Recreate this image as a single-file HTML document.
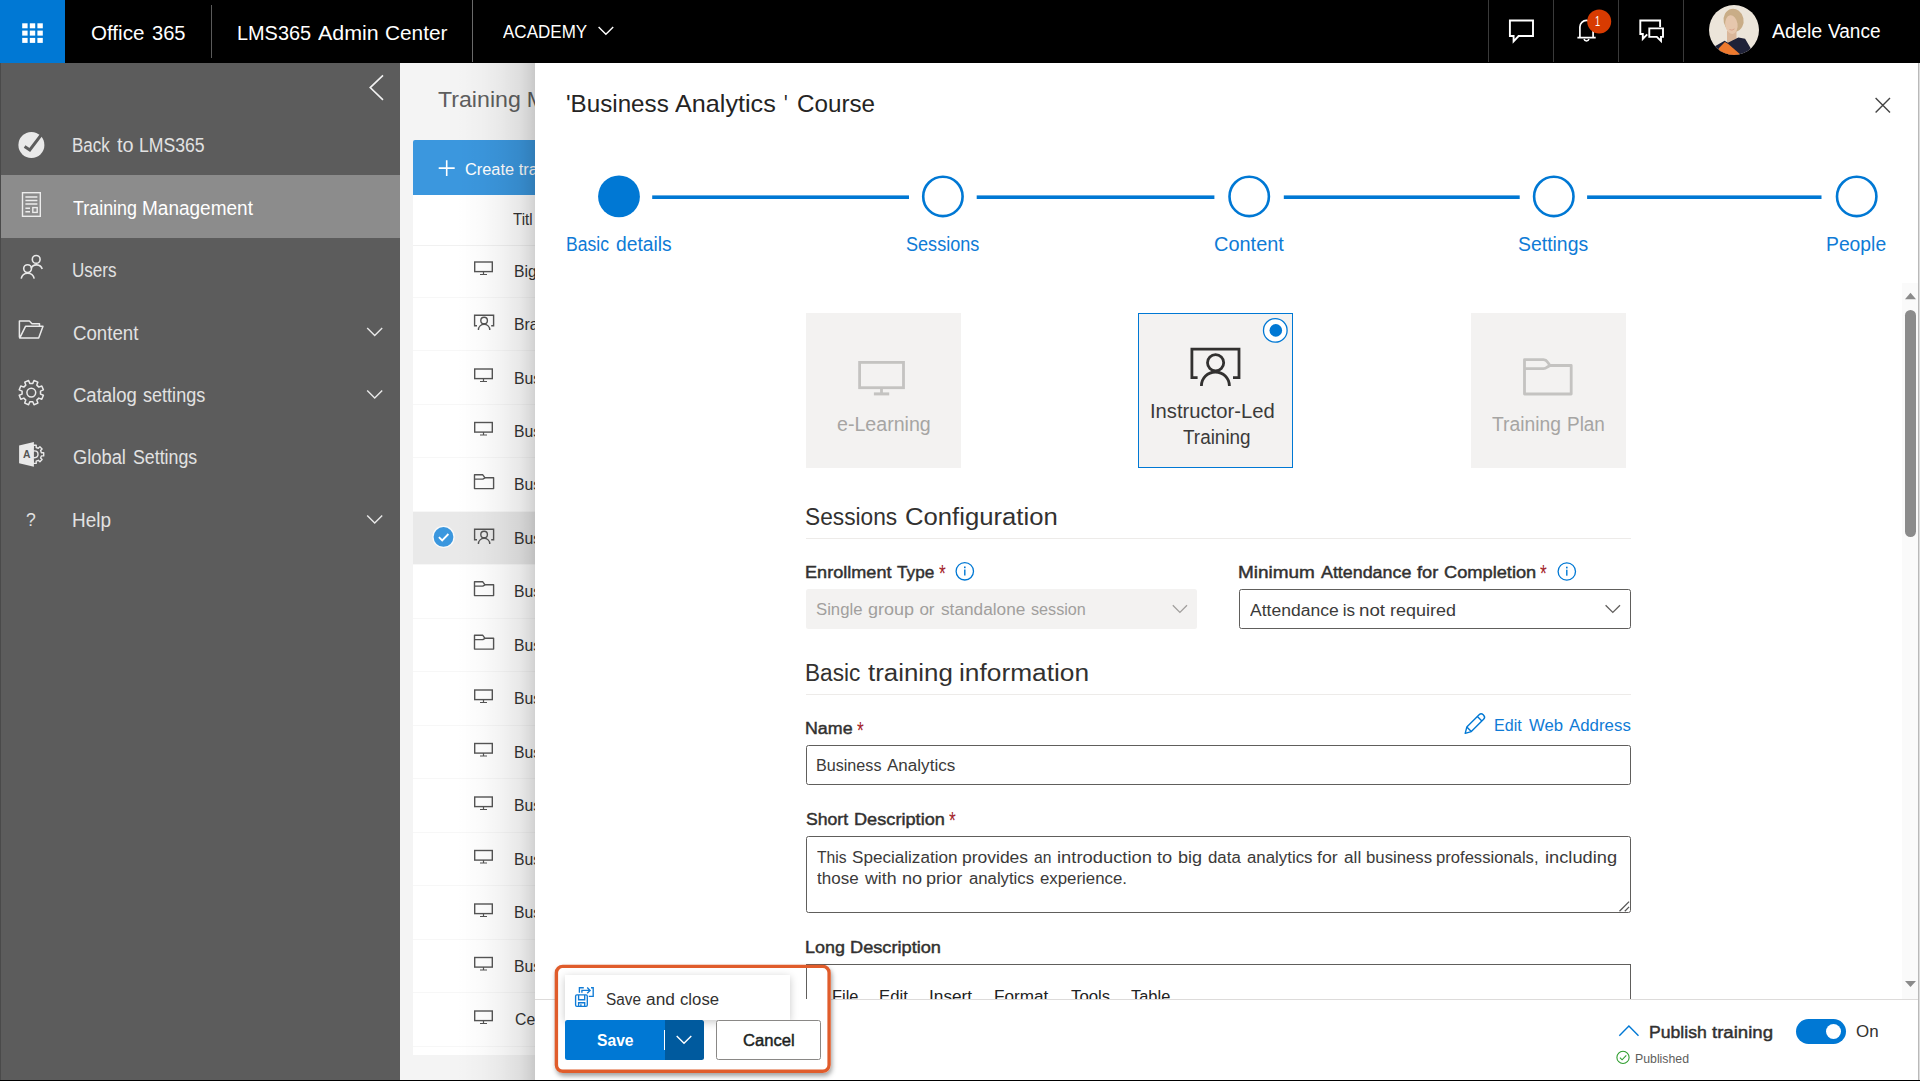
<!DOCTYPE html>
<html><head><meta charset="utf-8"><title>LMS365 Admin Center</title>
<style>
html,body{margin:0;padding:0}
body{width:1920px;height:1081px;overflow:hidden;position:relative;background:#f4f4f4;font-family:"Liberation Sans",sans-serif}
.t{position:absolute;white-space:nowrap;line-height:1;transform-origin:0 0}
.a{position:absolute}
</style></head><body>
<!-- main list area -->
<div class="a" style="left:413px;top:195px;width:130px;height:860px;background:#ffffff"></div>
<div class="a" style="left:413px;top:140px;width:130px;height:55px;background:#3b97de;border-radius:2px 0 0 0"></div>
<div class="a" style="left:413px;top:511px;width:130px;height:53.5px;background:#e9e9e9"></div>
<div class="a" style="left:413px;top:245px;width:130px;height:1px;background:#f1f1f1"></div>
<div class="a" style="left:413px;top:297px;width:130px;height:1px;background:#f7f7f7"></div>
<div class="a" style="left:413px;top:350px;width:130px;height:1px;background:#f7f7f7"></div>
<div class="a" style="left:413px;top:404px;width:130px;height:1px;background:#f7f7f7"></div>
<div class="a" style="left:413px;top:457px;width:130px;height:1px;background:#f7f7f7"></div>
<div class="a" style="left:413px;top:511px;width:130px;height:1px;background:#f7f7f7"></div>
<div class="a" style="left:413px;top:564px;width:130px;height:1px;background:#f7f7f7"></div>
<div class="a" style="left:413px;top:618px;width:130px;height:1px;background:#f7f7f7"></div>
<div class="a" style="left:413px;top:671px;width:130px;height:1px;background:#f7f7f7"></div>
<div class="a" style="left:413px;top:725px;width:130px;height:1px;background:#f7f7f7"></div>
<div class="a" style="left:413px;top:778px;width:130px;height:1px;background:#f7f7f7"></div>
<div class="a" style="left:413px;top:832px;width:130px;height:1px;background:#f7f7f7"></div>
<div class="a" style="left:413px;top:885px;width:130px;height:1px;background:#f7f7f7"></div>
<div class="a" style="left:413px;top:939px;width:130px;height:1px;background:#f7f7f7"></div>
<div class="a" style="left:413px;top:992px;width:130px;height:1px;background:#f7f7f7"></div>
<div class="a" style="left:413px;top:1046px;width:130px;height:1px;background:#f7f7f7"></div>
<span class="t" style="left:437.80px;top:87px;font-size:22.33px;line-height:25px;color:#5e5e5e;transform:scaleX(1.0367);">Training</span>
<span class="t" style="left:526.80px;top:87px;font-size:22.33px;line-height:25px;color:#5e5e5e;">M</span>
<span class="t" style="left:465.30px;top:160px;font-size:17.06px;line-height:19px;color:#ffffff;transform:scaleX(0.9600);">Create tra</span>
<span class="t" style="left:513.20px;top:211px;font-size:15.84px;line-height:17px;color:#333333;transform:scaleX(0.9500);">Titl</span>
<span class="t" style="left:514.03px;top:262px;font-size:16.28px;line-height:18px;color:#333333;transform:scaleX(0.9700);">Big D</span>
<span class="t" style="left:514.03px;top:315px;font-size:16.28px;line-height:18px;color:#333333;transform:scaleX(0.9700);">Bran</span>
<span class="t" style="left:514.03px;top:369px;font-size:16.28px;line-height:18px;color:#333333;transform:scaleX(0.9700);">Bus</span>
<span class="t" style="left:514.03px;top:422px;font-size:16.28px;line-height:18px;color:#333333;transform:scaleX(0.9700);">Bus</span>
<span class="t" style="left:514.03px;top:475px;font-size:16.28px;line-height:18px;color:#333333;transform:scaleX(0.9700);">Bus</span>
<span class="t" style="left:514.03px;top:529px;font-size:16.28px;line-height:18px;color:#333333;transform:scaleX(0.9700);">Bus</span>
<span class="t" style="left:514.03px;top:582px;font-size:16.28px;line-height:18px;color:#333333;transform:scaleX(0.9700);">Bus</span>
<span class="t" style="left:514.03px;top:636px;font-size:16.28px;line-height:18px;color:#333333;transform:scaleX(0.9700);">Bus</span>
<span class="t" style="left:514.03px;top:689px;font-size:16.28px;line-height:18px;color:#333333;transform:scaleX(0.9700);">Bus</span>
<span class="t" style="left:514.03px;top:743px;font-size:16.28px;line-height:18px;color:#333333;transform:scaleX(0.9700);">Bus</span>
<span class="t" style="left:514.03px;top:796px;font-size:16.28px;line-height:18px;color:#333333;transform:scaleX(0.9700);">Bus</span>
<span class="t" style="left:514.03px;top:850px;font-size:16.28px;line-height:18px;color:#333333;transform:scaleX(0.9700);">Bus</span>
<span class="t" style="left:514.03px;top:903px;font-size:16.28px;line-height:18px;color:#333333;transform:scaleX(0.9700);">Bus</span>
<span class="t" style="left:514.03px;top:957px;font-size:16.28px;line-height:18px;color:#333333;transform:scaleX(0.9700);">Bus</span>
<span class="t" style="left:515.00px;top:1010px;font-size:16.28px;line-height:18px;color:#333333;transform:scaleX(0.9700);">Cer</span>
<svg class="a" style="left:0;top:0" width="545" height="1081" viewBox="0 0 545 1081"><g transform="translate(474,261.3)"><rect x="0.7" y="0.7" width="17.6" height="9.6" fill="none" stroke="#555" stroke-width="1.4"/><path d="M9.5 10.3v2.6M6 13.2h7" stroke="#555" stroke-width="1.2" fill="none"/></g><g transform="translate(474,314.5)" fill="none" stroke="#555" stroke-width="1.4"><path d="M3 11.3H0.6V0.7H19.6V11.3H17.2"/><circle cx="10.1" cy="6" r="3.3"/><path d="M4.4 15.4a5.7 5.7 0 0 1 11.4 0"/></g><g transform="translate(474,368.3)"><rect x="0.7" y="0.7" width="17.6" height="9.6" fill="none" stroke="#555" stroke-width="1.4"/><path d="M9.5 10.3v2.6M6 13.2h7" stroke="#555" stroke-width="1.2" fill="none"/></g><g transform="translate(474,421.8)"><rect x="0.7" y="0.7" width="17.6" height="9.6" fill="none" stroke="#555" stroke-width="1.4"/><path d="M9.5 10.3v2.6M6 13.2h7" stroke="#555" stroke-width="1.2" fill="none"/></g><g transform="translate(474,474.1)" fill="none" stroke="#555" stroke-width="1.4" stroke-linejoin="round"><path d="M0.5 0.7H8.8l2.2 3H19.6V14.5H0.5Z"/><path d="M0.5 5H8.8l2.2-1.3"/></g><g transform="translate(474,528.5)" fill="none" stroke="#555" stroke-width="1.4"><path d="M3 11.3H0.6V0.7H19.6V11.3H17.2"/><circle cx="10.1" cy="6" r="3.3"/><path d="M4.4 15.4a5.7 5.7 0 0 1 11.4 0"/></g><g transform="translate(474,581.1)" fill="none" stroke="#555" stroke-width="1.4" stroke-linejoin="round"><path d="M0.5 0.7H8.8l2.2 3H19.6V14.5H0.5Z"/><path d="M0.5 5H8.8l2.2-1.3"/></g><g transform="translate(474,634.6)" fill="none" stroke="#555" stroke-width="1.4" stroke-linejoin="round"><path d="M0.5 0.7H8.8l2.2 3H19.6V14.5H0.5Z"/><path d="M0.5 5H8.8l2.2-1.3"/></g><g transform="translate(474,689.3)"><rect x="0.7" y="0.7" width="17.6" height="9.6" fill="none" stroke="#555" stroke-width="1.4"/><path d="M9.5 10.3v2.6M6 13.2h7" stroke="#555" stroke-width="1.2" fill="none"/></g><g transform="translate(474,742.8)"><rect x="0.7" y="0.7" width="17.6" height="9.6" fill="none" stroke="#555" stroke-width="1.4"/><path d="M9.5 10.3v2.6M6 13.2h7" stroke="#555" stroke-width="1.2" fill="none"/></g><g transform="translate(474,796.3)"><rect x="0.7" y="0.7" width="17.6" height="9.6" fill="none" stroke="#555" stroke-width="1.4"/><path d="M9.5 10.3v2.6M6 13.2h7" stroke="#555" stroke-width="1.2" fill="none"/></g><g transform="translate(474,849.8)"><rect x="0.7" y="0.7" width="17.6" height="9.6" fill="none" stroke="#555" stroke-width="1.4"/><path d="M9.5 10.3v2.6M6 13.2h7" stroke="#555" stroke-width="1.2" fill="none"/></g><g transform="translate(474,903.3)"><rect x="0.7" y="0.7" width="17.6" height="9.6" fill="none" stroke="#555" stroke-width="1.4"/><path d="M9.5 10.3v2.6M6 13.2h7" stroke="#555" stroke-width="1.2" fill="none"/></g><g transform="translate(474,956.8)"><rect x="0.7" y="0.7" width="17.6" height="9.6" fill="none" stroke="#555" stroke-width="1.4"/><path d="M9.5 10.3v2.6M6 13.2h7" stroke="#555" stroke-width="1.2" fill="none"/></g><g transform="translate(474,1010.3)"><rect x="0.7" y="0.7" width="17.6" height="9.6" fill="none" stroke="#555" stroke-width="1.4"/><path d="M9.5 10.3v2.6M6 13.2h7" stroke="#555" stroke-width="1.2" fill="none"/></g><circle cx="443.5" cy="536.9" r="11.2" fill="#fff" fill-opacity="0.75"/><circle cx="443.5" cy="536.9" r="9.9" fill="#3b97de"/><path d="M438.9 537.1l3.3 3.3 6.2-6.4" fill="none" stroke="#fff" stroke-width="1.8"/><path d="M446.7 160.2v15.8M438.7 168.1h16" stroke="#fff" stroke-width="1.6" fill="none"/></svg>
<div class="a" style="left:455px;top:62px;width:80px;height:1019px;background:linear-gradient(to right,rgba(0,0,0,0) 0%,rgba(0,0,0,0.004) 10%,rgba(0,0,0,0.02) 35%,rgba(0,0,0,0.047) 57.5%,rgba(0,0,0,0.09) 81%,rgba(0,0,0,0.137) 92.5%,rgba(0,0,0,0.18) 100%)"></div>
<!-- sidebar -->
<div class="a" style="left:0px;top:62px;width:400px;height:1019px;background:#5c5c5c"></div>
<div class="a" style="left:0px;top:175px;width:400px;height:62.5px;background:#8c8c8c"></div>
<div class="a" style="left:0px;top:62px;width:1px;height:1019px;background:#4a4a4a"></div>
<!-- panel -->
<div class="a" style="left:535px;top:62px;width:1385px;height:1019px;background:#ffffff"></div>
<svg class="a" style="left:0;top:0" width="1920" height="300" viewBox="0 0 1920 300"><rect x="652.2" y="195.4" width="256.8" height="3.6" fill="#0078d4"/><rect x="976.7" y="195.4" width="237.7" height="3.6" fill="#0078d4"/><rect x="1283.8" y="195.4" width="235.9" height="3.6" fill="#0078d4"/><rect x="1587.1" y="195.4" width="234.4" height="3.6" fill="#0078d4"/><circle cx="619" cy="196.4" r="20.9" fill="#0078d4"/><circle cx="942.9" cy="196.4" r="19.7" fill="#fff" stroke="#0078d4" stroke-width="2.6"/><circle cx="1249.2" cy="196.4" r="19.7" fill="#fff" stroke="#0078d4" stroke-width="2.6"/><circle cx="1553.8" cy="196.4" r="19.7" fill="#fff" stroke="#0078d4" stroke-width="2.6"/><circle cx="1856.7" cy="196.4" r="19.7" fill="#fff" stroke="#0078d4" stroke-width="2.6"/><path d="M1875.6 98l14.4 14.4M1890 98l-14.4 14.4" stroke="#444" stroke-width="1.4" fill="none"/></svg>
<div class="a" style="left:806px;top:313px;width:155px;height:155px;background:#f3f2f1"></div>
<div class="a" style="left:1138px;top:313px;width:153px;height:153px;background:#f3f2f1;border:1px solid #0078d4"></div>
<div class="a" style="left:1471px;top:313px;width:155px;height:155px;background:#f3f2f1"></div>
<div class="a" style="left:806px;top:589px;width:391px;height:39.5px;background:#f3f2f1;border-radius:2.5px"></div>
<div class="a" style="left:1239px;top:589px;width:390px;height:38px;border:1px solid #605e5c;border-radius:2.5px"></div>
<div class="a" style="left:806px;top:745px;width:823px;height:38px;border:1px solid #605e5c;border-radius:2.5px"></div>
<div class="a" style="left:806px;top:836px;width:823px;height:75px;border:1px solid #605e5c;border-radius:2.5px"></div>
<div class="a" style="left:806px;top:964px;width:823px;height:60px;border:1px solid #605e5c"></div>
<svg class="a" style="left:0;top:0" width="1920" height="1000" viewBox="0 0 1920 1000"><g fill="none" stroke="#c4c3c1" stroke-width="2.8"><rect x="859.6" y="362.4" width="43.9" height="25.3"/><path d="M881.5 388v5"/><path d="M873.9 393.9h15.3" stroke-width="3"/></g><g fill="none" stroke="#323130" stroke-width="2.8"><path d="M1197.6 377.6H1191.9V349.2H1239V377.6H1233"/><circle cx="1215.6" cy="362.8" r="8.1"/><path d="M1201.4 386a14 14 0 0 1 28 0"/></g><circle cx="1275.3" cy="330.4" r="11.8" fill="#fff" stroke="#0078d4" stroke-width="1.3"/><circle cx="1275.8" cy="330.4" r="6.3" fill="#0078d4"/><g fill="none" stroke="#c4c3c1" stroke-width="2.8" stroke-linejoin="round"><path d="M1524.5 359.6H1543.5Q1546 359.6 1547.5 362L1550 365.5H1571.2V394H1524.5Z"/><path d="M1524.5 368.7H1543.5Q1545.5 368.7 1547 367.3L1550 365.5"/></g><rect x="806" y="538" width="825" height="1" fill="#edebe9"/><rect x="806" y="694" width="825" height="1" fill="#edebe9"/><circle cx="964.8" cy="571.3" r="8.7" fill="none" stroke="#0078d4" stroke-width="1.3"/><rect x="964.0999999999999" y="569.5" width="1.4" height="6" fill="#0078d4"/><rect x="964.0" y="566.5" width="1.6" height="1.7" fill="#0078d4"/><circle cx="1566.8" cy="571.5" r="8.7" fill="none" stroke="#0078d4" stroke-width="1.3"/><rect x="1566.1" y="569.7" width="1.4" height="6" fill="#0078d4"/><rect x="1566.0" y="566.7" width="1.6" height="1.7" fill="#0078d4"/><path d="M1172.8 605.2l7.1 7.2 7.1-7.2" fill="none" stroke="#a19f9d" stroke-width="1.3"/><path d="M1605.6 605.2l7.2 7.2 7.2-7.2" fill="none" stroke="#605e5c" stroke-width="1.3"/><g fill="none" stroke="#0078d4" stroke-width="1.4" stroke-linejoin="round"><path d="M1465.2 733.3l1.6-6.2 12.3-12.3a2.9 2.9 0 0 1 4.1 0l0.4 0.4a2.9 2.9 0 0 1 0 4.1l-12.3 12.3z"/><path d="M1466.8 727.1l4.5 4.5M1477.4 716.5l4.5 4.5"/></g><path d="M1619.5 911.2l9.6-9.6M1624.8 911.2l4.3-4.3" stroke="#555" stroke-width="1.3" fill="none"/></svg>
<div class="a" style="left:1902px;top:283px;width:16px;height:716px;background:#fafafa"></div>
<div class="a" style="left:1905px;top:310.3px;width:11px;height:227px;background:#8b8b8b;border-radius:5.5px"></div>
<svg class="a" style="left:1900px;top:285px" width="20" height="710" viewBox="0 0 20 710"><path d="M5 14.2l5.5-6.4 5.5 6.4z" fill="#8b8b8b"/><path d="M5 695.9l5.5 6.2 5.5-6.2z" fill="#8b8b8b"/></svg>
<div class="a" style="left:1918px;top:62px;width:1px;height:1019px;background:#b9b9b9"></div>
<div class="a" style="left:1919px;top:62px;width:1px;height:1019px;background:#dedede"></div>
<span class="t" style="left:831.64px;top:987px;font-size:17.06px;line-height:19px;color:#222222;transform:scaleX(0.9620);">File</span>
<span class="t" style="left:878.82px;top:987px;font-size:17.06px;line-height:19px;color:#222222;transform:scaleX(0.9812);">Edit</span>
<span class="t" style="left:929.19px;top:987px;font-size:17.06px;line-height:19px;color:#222222;transform:scaleX(1.0120);">Insert</span>
<span class="t" style="left:993.80px;top:987px;font-size:17.06px;line-height:19px;color:#222222;transform:scaleX(1.0047);">Format</span>
<span class="t" style="left:1070.80px;top:987px;font-size:17.06px;line-height:19px;color:#222222;transform:scaleX(0.9829);">Tools</span>
<span class="t" style="left:1131.40px;top:987px;font-size:17.06px;line-height:19px;color:#222222;transform:scaleX(0.9635);">Table</span>
<!-- footer -->
<div class="a" style="left:535px;top:999px;width:1383px;height:82px;background:#ffffff;border-top:1px solid #dddbda;box-sizing:border-box"></div>
<div class="a" style="left:555px;top:965px;width:275.5px;height:107.8px;background:#fff;border-radius:8px;box-shadow:1px 3px 5px rgba(0,0,0,0.38)"></div>
<svg class="a" style="left:540px;top:955px" width="310" height="126" viewBox="540 955 310 126"><rect x="556.4" y="966.4" width="272.7" height="104.9" rx="6.3" fill="none" stroke="#e05c2b" stroke-width="3.4"/></svg>
<div class="a" style="left:806px;top:968px;width:1px;height:31px;background:#605e5c"></div>
<div class="a" style="left:565px;top:975px;width:225px;height:45px;background:#fff;box-shadow:0 2px 8px rgba(0,0,0,0.22)"></div>
<div class="a" style="left:565px;top:1020.3px;width:100px;height:39.4px;background:#0078d4;border-radius:2.5px 0 0 2.5px"></div>
<div class="a" style="left:665px;top:1020.3px;width:38.8px;height:39.4px;background:#005a9e;border-radius:0 2.5px 2.5px 0"></div>
<div class="a" style="left:664px;top:1030.3px;width:1px;height:19.4px;background:#ffffff"></div>
<div class="a" style="left:716px;top:1020.3px;width:102.8px;height:37.4px;background:#fff;border:1px solid #8a8886;border-radius:2.5px"></div>
<div class="a" style="left:1796px;top:1019px;width:50px;height:25px;background:#0078d4;border-radius:12.5px"></div>
<div class="a" style="left:1826px;top:1023.7px;width:15.4px;height:15.4px;background:#fff;border-radius:50%"></div>
<svg class="a" style="left:0;top:0" width="1920" height="1081" viewBox="0 0 1920 1081"><path d="M676.7 1036l7.3 7.3 7.3-7.3" fill="none" stroke="#fff" stroke-width="1.4"/><path d="M1619.3 1035.7l9.6-9.7 9.6 9.7" fill="none" stroke="#0078d4" stroke-width="1.4"/><circle cx="1623" cy="1057.4" r="6.1" fill="none" stroke="#2f9e2f" stroke-width="1.1"/><path d="M1619.9 1057.6l2.2 2.2 4.2-4.4" fill="none" stroke="#2f9e2f" stroke-width="1.1"/><g fill="none" stroke="#0f7bd6" stroke-width="1.35"><rect x="575.6" y="994.9" width="11.7" height="11.4" rx="1.3"/><path d="M578.6 995v4.7h6.1v-4.7"/><path d="M578.6 1006.2v-3.5h6.1v3.5M580.9 1006.2v-1.9"/><path d="M579.4 992.8V987.7H583.8"/><path d="M591 987.7H593.2V996.3H588.8"/><path d="M581.9 992.8V990.4H589.4M587.2 987.5L590.1 990.4L587.2 993.3"/></g></svg>
<!-- top bar -->
<div class="a" style="left:0px;top:0px;width:1920px;height:62.5px;background:#000000"></div>
<div class="a" style="left:0px;top:0px;width:65px;height:62.5px;background:#0078d4"></div>
<div class="a" style="left:211px;top:5px;width:1px;height:53px;background:#5a5a5a"></div>
<div class="a" style="left:472px;top:0px;width:1px;height:62px;background:#6a6a6a"></div>
<div class="a" style="left:1488px;top:0px;width:1px;height:62px;background:#3a3a3a"></div>
<div class="a" style="left:1553px;top:0px;width:1px;height:62px;background:#3a3a3a"></div>
<div class="a" style="left:1618px;top:0px;width:1px;height:62px;background:#3a3a3a"></div>
<div class="a" style="left:1683px;top:0px;width:1px;height:62px;background:#3a3a3a"></div>
<svg class="a" style="left:0;top:0" width="1920" height="63" viewBox="0 0 1920 63"><rect x="22.2" y="23.3" width="5.4" height="5" fill="#fff"/><rect x="29.8" y="23.3" width="5.4" height="5" fill="#fff"/><rect x="37.4" y="23.3" width="5.4" height="5" fill="#fff"/><rect x="22.2" y="30.6" width="5.4" height="5" fill="#fff"/><rect x="29.8" y="30.6" width="5.4" height="5" fill="#fff"/><rect x="37.4" y="30.6" width="5.4" height="5" fill="#fff"/><rect x="22.2" y="37.9" width="5.4" height="5" fill="#fff"/><rect x="29.8" y="37.9" width="5.4" height="5" fill="#fff"/><rect x="37.4" y="37.9" width="5.4" height="5" fill="#fff"/><path d="M598.6 27l7.3 7.2 7.3-7.2" fill="none" stroke="#fff" stroke-width="1.4"/><path d="M1509.9 20.5H1533V36H1518.6L1513.6 41.4V36H1509.9Z" fill="none" stroke="#fff" stroke-width="1.9"/><path d="M1579.9 37.5V27a6.6 6.6 0 0 1 13.2 0V37.5M1577.4 37.6H1595.7" fill="none" stroke="#fff" stroke-width="1.7"/><path d="M1584 39a2.6 2.6 0 0 0 5 0" fill="none" stroke="#fff" stroke-width="1.5"/><circle cx="1599.2" cy="21.5" r="12" fill="#d83b01"/><path d="M1660.1 27V20.5H1640.3V34H1642.8V39L1647.2 34.4" fill="none" stroke="#fff" stroke-width="1.9"/><path d="M1649.3 28.4H1663V36.9H1661V41L1656.8 36.9H1649.3Z" fill="none" stroke="#fff" stroke-width="1.9"/><defs><clipPath id="av"><circle cx="1734" cy="30" r="25"/></clipPath></defs>
<g clip-path="url(#av)"><rect x="1708" y="4" width="52" height="52" fill="#ece5da"/>
<ellipse cx="1733.6" cy="20.3" rx="10" ry="11.6" fill="#c9ad87" transform="rotate(-12 1733.6 20.3)"/>
<rect x="1727" y="31" width="9.5" height="12.5" fill="#dab79a"/>
<ellipse cx="1731.4" cy="24.6" rx="6.2" ry="9.4" fill="#e6c7ad" transform="rotate(-8 1731.4 24.6)"/>
<path d="M1729.5 29.5q2.5 1.6 5 -0.6" fill="none" stroke="#d9a48c" stroke-width="1"/>
<path d="M1714.5 46.5L1724.6 40.8L1727.9 42.8L1738.4 37.6L1745.1 38.7L1750.4 47.8L1753 57H1712Z" fill="#1f2238"/>
<path d="M1724.9 42L1728.3 44L1739.8 54L1736 57H1722L1718.6 48.6Z" fill="#ee7a2e"/></g></svg>
<svg class="a" style="left:0;top:62px" width="400" height="600" viewBox="0 62 400 600"><path d="M383 75.3L370.2 87.6L383 99.9" fill="none" stroke="#f2f2f2" stroke-width="1.6"/><path d="M367.2 328.0l7.5 7.6 7.5-7.6" fill="none" stroke="#e9e9e9" stroke-width="1.4"/><path d="M367.2 390.5l7.5 7.6 7.5-7.6" fill="none" stroke="#e9e9e9" stroke-width="1.4"/><path d="M367.2 515.5l7.5 7.6 7.5-7.6" fill="none" stroke="#e9e9e9" stroke-width="1.4"/><circle cx="31.4" cy="145" r="13" fill="#e9e9e9"/><path d="M24.6 146.6l5.2 3.4 11.6-15.4" fill="none" stroke="#5c5c5c" stroke-width="3"/><g fill="none" stroke="#ececec" stroke-width="1.4"><rect x="22.5" y="192.7" width="17.8" height="23.6"/><path d="M25.4 197h12M25.4 200.5h12M25.4 204h12M25.4 208.2h4.6M25.4 211.7h4.6"/><rect x="32.8" y="207.6" width="4.4" height="4.8"/></g><g fill="none" stroke="#e9e9e9" stroke-width="1.6"><circle cx="36.2" cy="259.4" r="3.9"/><path d="M31 268.4a6 6 0 0 1 11.2 0.6"/><circle cx="27.6" cy="268.6" r="3.9"/><path d="M21.2 278.6a6.6 6.6 0 0 1 13 0"/></g><path d="M19.4 337.6V321H29.4L32 323.8H39.5V326.2M19.7 338.1L25.5 326.3H43L38.7 338.1Z" fill="none" stroke="#e9e9e9" stroke-width="1.5" stroke-linejoin="round"/><path d="M43.4 395.3L41.8 399.2L38.8 398.1L36.8 400.1L37.9 403.1L34.0 404.7L32.8 401.8L29.8 401.8L28.6 404.7L24.7 403.1L25.8 400.1L23.8 398.1L20.8 399.2L19.2 395.3L22.1 394.1L22.1 391.1L19.2 389.9L20.8 386.0L23.8 387.1L25.8 385.1L24.7 382.1L28.6 380.5L29.8 383.4L32.8 383.4L34.0 380.5L37.9 382.1L36.8 385.1L38.8 387.1L41.8 386.0L43.4 389.9L40.5 391.1L40.5 394.1Z" fill="none" stroke="#e9e9e9" stroke-width="1.5" stroke-linejoin="round"/><circle cx="31.3" cy="392.6" r="4.4" fill="none" stroke="#e9e9e9" stroke-width="1.5"/><path d="M43.7 452.7L43.7 455.9L41.4 455.9L40.6 458.0L42.1 459.6L39.9 461.8L38.3 460.3L36.2 461.1L36.2 463.4L33.0 463.4L33.0 461.1L30.9 460.3L29.3 461.8L27.1 459.6L28.6 458.0L27.8 455.9L25.5 455.9L25.5 452.7L27.8 452.7L28.6 450.6L27.1 449.0L29.3 446.8L30.9 448.3L33.0 447.5L33.0 445.2L36.2 445.2L36.2 447.5L38.3 448.3L39.9 446.8L42.1 449.0L40.6 450.6L41.4 452.7Z" fill="none" stroke="#e9e9e9" stroke-width="1.4" stroke-linejoin="round"/><circle cx="34.6" cy="454.3" r="3.4" fill="none" stroke="#e9e9e9" stroke-width="1.4"/><path d="M19.1 445.5L33.9 442V466.8L19.1 463.3Z" fill="#e9e9e9"/></svg>
<span class="t" style="left:22.6px;top:448.7px;font-size:11.5px;font-weight:700;color:#555;transform:scaleX(0.9)">A</span>
<span class="t" style="left:90.80px;top:21px;font-size:20.72px;line-height:23px;color:#ffffff;transform:scaleX(0.9941);">Office</span>
<span class="t" style="left:152.00px;top:21px;font-size:20.72px;line-height:23px;color:#ffffff;transform:scaleX(0.9693);">365</span>
<span class="t" style="left:236.54px;top:21px;font-size:20.72px;line-height:23px;color:#ffffff;transform:scaleX(0.9597);">LMS365</span>
<span class="t" style="left:317.80px;top:21px;font-size:20.72px;line-height:23px;color:#ffffff;transform:scaleX(1.0343);">Admin</span>
<span class="t" style="left:384.60px;top:21px;font-size:20.72px;line-height:23px;color:#ffffff;transform:scaleX(1.0035);">Center</span>
<span class="t" style="left:503.30px;top:21px;font-size:18.28px;line-height:21px;color:#ffffff;transform:scaleX(0.9318);">ACADEMY</span>
<span class="t" style="left:1772.40px;top:20px;font-size:19.5px;line-height:22px;color:#ffffff;transform:scaleX(1.0076);">Adele</span>
<span class="t" style="left:1827.80px;top:20px;font-size:19.5px;line-height:22px;color:#ffffff;transform:scaleX(0.9755);">Vance</span>
<span class="t" style="left:1595.34px;top:13px;font-size:14.04px;line-height:16px;color:#ffffff;transform:scaleX(0.6571);">1</span>
<span class="t" style="left:72.43px;top:134px;font-size:19.5px;line-height:22px;color:#e2e2e2;transform:scaleX(0.8732);">Back</span>
<span class="t" style="left:116.50px;top:134px;font-size:19.5px;line-height:22px;color:#e2e2e2;transform:scaleX(1.0172);">to</span>
<span class="t" style="left:138.90px;top:134px;font-size:19.5px;line-height:22px;color:#e2e2e2;transform:scaleX(0.9041);">LMS365</span>
<span class="t" style="left:73.30px;top:197px;font-size:19.5px;line-height:22px;color:#ffffff;transform:scaleX(0.9175);">Training</span>
<span class="t" style="left:142.23px;top:197px;font-size:19.5px;line-height:22px;color:#ffffff;transform:scaleX(0.9744);">Management</span>
<span class="t" style="left:72.42px;top:259px;font-size:19.5px;line-height:22px;color:#e2e2e2;transform:scaleX(0.8750);">Users</span>
<span class="t" style="left:72.90px;top:322px;font-size:19.5px;line-height:22px;color:#e2e2e2;transform:scaleX(0.9567);">Content</span>
<span class="t" style="left:72.90px;top:384px;font-size:19.5px;line-height:22px;color:#e2e2e2;transform:scaleX(0.9493);">Catalog</span>
<span class="t" style="left:143.10px;top:384px;font-size:19.5px;line-height:22px;color:#e2e2e2;transform:scaleX(0.9266);">settings</span>
<span class="t" style="left:72.90px;top:446px;font-size:19.5px;line-height:22px;color:#e2e2e2;transform:scaleX(0.9387);">Global</span>
<span class="t" style="left:132.80px;top:446px;font-size:19.5px;line-height:22px;color:#e2e2e2;transform:scaleX(0.9108);">Settings</span>
<span class="t" style="left:71.93px;top:509px;font-size:19.5px;line-height:22px;color:#e2e2e2;transform:scaleX(0.9705);">Help</span>
<span class="t" style="left:26.00px;top:510px;font-size:17.55px;line-height:20px;color:#e2e2e2;">?</span>
<span class="t" style="left:565.57px;top:91px;font-size:23.59px;line-height:26px;color:#252423;transform:scaleX(1.0256);">'Business</span>
<span class="t" style="left:675.40px;top:91px;font-size:23.59px;line-height:26px;color:#252423;transform:scaleX(1.0678);">Analytics</span>
<span class="t" style="left:783.90px;top:91px;font-size:23.59px;line-height:26px;color:#252423;transform:scaleX(0.8000);">'</span>
<span class="t" style="left:796.77px;top:91px;font-size:23.59px;line-height:26px;color:#252423;transform:scaleX(1.0268);">Course</span>
<span class="t" style="left:565.60px;top:233px;font-size:19.5px;line-height:22px;color:#0f7bd6;transform:scaleX(0.9002);">Basic</span>
<span class="t" style="left:615.60px;top:233px;font-size:19.5px;line-height:22px;color:#0f7bd6;transform:scaleX(0.9873);">details</span>
<span class="t" style="left:905.70px;top:233px;font-size:19.5px;line-height:22px;color:#0f7bd6;transform:scaleX(0.9273);">Sessions</span>
<span class="t" style="left:1213.70px;top:233px;font-size:19.5px;line-height:22px;color:#0f7bd6;transform:scaleX(1.0235);">Content</span>
<span class="t" style="left:1518.20px;top:233px;font-size:19.5px;line-height:22px;color:#0f7bd6;transform:scaleX(0.9956);">Settings</span>
<span class="t" style="left:1826.01px;top:233px;font-size:19.5px;line-height:22px;color:#0f7bd6;transform:scaleX(0.9903);">People</span>
<span class="t" style="left:836.50px;top:413px;font-size:19.5px;line-height:22px;color:#a6a5a3;transform:scaleX(1.0055);">e-Learning</span>
<span class="t" style="left:1150.16px;top:400px;font-size:19.5px;line-height:22px;color:#3b3a39;transform:scaleX(1.0358);">Instructor-Led</span>
<span class="t" style="left:1182.70px;top:426px;font-size:19.5px;line-height:22px;color:#3b3a39;transform:scaleX(0.9698);">Training</span>
<span class="t" style="left:1492.10px;top:413px;font-size:19.5px;line-height:22px;color:#a6a5a3;transform:scaleX(0.9887);">Training</span>
<span class="t" style="left:1567.03px;top:413px;font-size:19.5px;line-height:22px;color:#a6a5a3;transform:scaleX(0.9709);">Plan</span>
<span class="t" style="left:805.45px;top:503px;font-size:23.98px;line-height:27px;color:#323130;transform:scaleX(0.9473);">Sessions</span>
<span class="t" style="left:905.13px;top:503px;font-size:23.98px;line-height:27px;color:#323130;transform:scaleX(1.0710);">Configuration</span>
<span class="t" style="left:805.46px;top:659px;font-size:23.98px;line-height:27px;color:#323130;transform:scaleX(0.9423);">Basic</span>
<span class="t" style="left:868.30px;top:659px;font-size:23.98px;line-height:27px;color:#323130;transform:scaleX(1.0792);">training</span>
<span class="t" style="left:959.00px;top:659px;font-size:23.98px;line-height:27px;color:#323130;transform:scaleX(1.0969);">information</span>
<span class="t" style="left:805.44px;top:563px;font-size:17.06px;line-height:19px;color:#323130;-webkit-text-stroke:0.45px currentColor;transform:scaleX(1.0614);">Enrollment</span>
<span class="t" style="left:897.20px;top:563px;font-size:17.06px;line-height:19px;color:#323130;-webkit-text-stroke:0.45px currentColor;transform:scaleX(1.0089);">Type</span>
<span class="t" style="left:938.60px;top:561px;font-size:23.4px;line-height:26px;color:#a4262c;transform:scaleX(0.7444);">*</span>
<span class="t" style="left:1238.39px;top:563px;font-size:17.06px;line-height:19px;color:#323130;-webkit-text-stroke:0.45px currentColor;transform:scaleX(1.1113);">Minimum</span>
<span class="t" style="left:1321.00px;top:563px;font-size:17.06px;line-height:19px;color:#323130;-webkit-text-stroke:0.45px currentColor;transform:scaleX(1.0470);">Attendance</span>
<span class="t" style="left:1416.80px;top:563px;font-size:17.06px;line-height:19px;color:#323130;-webkit-text-stroke:0.45px currentColor;transform:scaleX(1.0684);">for</span>
<span class="t" style="left:1444.40px;top:563px;font-size:17.06px;line-height:19px;color:#323130;-webkit-text-stroke:0.45px currentColor;transform:scaleX(1.0695);">Completion</span>
<span class="t" style="left:1540.20px;top:561px;font-size:23.4px;line-height:26px;color:#a4262c;transform:scaleX(0.7444);">*</span>
<span class="t" style="left:815.90px;top:600px;font-size:17.06px;line-height:19px;color:#a19f9d;transform:scaleX(0.9807);">Single</span>
<span class="t" style="left:867.90px;top:600px;font-size:17.06px;line-height:19px;color:#a19f9d;transform:scaleX(1.0552);">group</span>
<span class="t" style="left:919.40px;top:600px;font-size:17.06px;line-height:19px;color:#a19f9d;">or</span>
<span class="t" style="left:940.90px;top:600px;font-size:17.06px;line-height:19px;color:#a19f9d;transform:scaleX(1.0117);">standalone</span>
<span class="t" style="left:1030.80px;top:600px;font-size:17.06px;line-height:19px;color:#a19f9d;transform:scaleX(0.9491);">session</span>
<span class="t" style="left:1250.30px;top:601px;font-size:17.06px;line-height:19px;color:#3b3a39;transform:scaleX(1.0283);">Attendance</span>
<span class="t" style="left:1342.70px;top:601px;font-size:17.06px;line-height:19px;color:#3b3a39;">is</span>
<span class="t" style="left:1358.90px;top:601px;font-size:17.06px;line-height:19px;color:#3b3a39;transform:scaleX(1.0975);">not</span>
<span class="t" style="left:1389.85px;top:601px;font-size:17.06px;line-height:19px;color:#3b3a39;transform:scaleX(1.0530);">required</span>
<span class="t" style="left:805.25px;top:719px;font-size:17.06px;line-height:19px;color:#323130;-webkit-text-stroke:0.45px currentColor;transform:scaleX(1.0457);">Name</span>
<span class="t" style="left:857.00px;top:718px;font-size:23.4px;line-height:26px;color:#a4262c;transform:scaleX(0.7444);">*</span>
<span class="t" style="left:1494.26px;top:716px;font-size:17.06px;line-height:19px;color:#0f7bd6;transform:scaleX(0.9428);">Edit</span>
<span class="t" style="left:1529.40px;top:716px;font-size:17.06px;line-height:19px;color:#0f7bd6;transform:scaleX(0.9807);">Web</span>
<span class="t" style="left:1569.00px;top:716px;font-size:17.06px;line-height:19px;color:#0f7bd6;transform:scaleX(0.9885);">Address</span>
<span class="t" style="left:816.05px;top:756px;font-size:17.06px;line-height:19px;color:#3b3a39;transform:scaleX(0.9461);">Business</span>
<span class="t" style="left:887.00px;top:756px;font-size:17.06px;line-height:19px;color:#3b3a39;">Analytics</span>
<span class="t" style="left:806.30px;top:810px;font-size:17.06px;line-height:19px;color:#323130;-webkit-text-stroke:0.45px currentColor;transform:scaleX(1.0339);">Short</span>
<span class="t" style="left:853.63px;top:810px;font-size:17.06px;line-height:19px;color:#323130;-webkit-text-stroke:0.45px currentColor;transform:scaleX(1.0658);">Description</span>
<span class="t" style="left:948.80px;top:808px;font-size:23.4px;line-height:26px;color:#a4262c;transform:scaleX(0.7444);">*</span>
<span class="t" style="left:817.40px;top:848px;font-size:17.06px;line-height:19px;color:#3b3a39;transform:scaleX(0.9185);">This</span>
<span class="t" style="left:852.40px;top:848px;font-size:17.06px;line-height:19px;color:#3b3a39;transform:scaleX(1.0028);">Specialization</span>
<span class="t" style="left:962.47px;top:848px;font-size:17.06px;line-height:19px;color:#3b3a39;transform:scaleX(1.0253);">provides</span>
<span class="t" style="left:1034.00px;top:848px;font-size:17.06px;line-height:19px;color:#3b3a39;transform:scaleX(0.9199);">an</span>
<span class="t" style="left:1056.52px;top:848px;font-size:17.06px;line-height:19px;color:#3b3a39;transform:scaleX(1.0779);">introduction</span>
<span class="t" style="left:1157.10px;top:848px;font-size:17.06px;line-height:19px;color:#3b3a39;transform:scaleX(1.0702);">to</span>
<span class="t" style="left:1177.94px;top:848px;font-size:17.06px;line-height:19px;color:#3b3a39;transform:scaleX(1.0579);">big</span>
<span class="t" style="left:1207.90px;top:848px;font-size:17.06px;line-height:19px;color:#3b3a39;transform:scaleX(0.9882);">data</span>
<span class="t" style="left:1246.80px;top:848px;font-size:17.06px;line-height:19px;color:#3b3a39;transform:scaleX(0.9878);">analytics</span>
<span class="t" style="left:1317.00px;top:848px;font-size:17.06px;line-height:19px;color:#3b3a39;transform:scaleX(1.0387);">for</span>
<span class="t" style="left:1344.00px;top:848px;font-size:17.06px;line-height:19px;color:#3b3a39;transform:scaleX(1.0081);">all</span>
<span class="t" style="left:1365.52px;top:848px;font-size:17.06px;line-height:19px;color:#3b3a39;transform:scaleX(0.9824);">business</span>
<span class="t" style="left:1436.43px;top:848px;font-size:17.06px;line-height:19px;color:#3b3a39;transform:scaleX(0.9745);">professionals,</span>
<span class="t" style="left:1545.43px;top:848px;font-size:17.06px;line-height:19px;color:#3b3a39;transform:scaleX(1.0713);">including</span>
<span class="t" style="left:817.40px;top:869px;font-size:17.06px;line-height:19px;color:#3b3a39;transform:scaleX(0.9971);">those</span>
<span class="t" style="left:865.04px;top:869px;font-size:17.06px;line-height:19px;color:#3b3a39;transform:scaleX(1.0411);">with</span>
<span class="t" style="left:901.64px;top:869px;font-size:17.06px;line-height:19px;color:#3b3a39;transform:scaleX(1.0640);">no</span>
<span class="t" style="left:926.34px;top:869px;font-size:17.06px;line-height:19px;color:#3b3a39;transform:scaleX(1.0621);">prior</span>
<span class="t" style="left:969.00px;top:869px;font-size:17.06px;line-height:19px;color:#3b3a39;transform:scaleX(0.9802);">analytics</span>
<span class="t" style="left:1039.60px;top:869px;font-size:17.06px;line-height:19px;color:#3b3a39;transform:scaleX(0.9863);">experience.</span>
<span class="t" style="left:805.25px;top:938px;font-size:17.06px;line-height:19px;color:#323130;-webkit-text-stroke:0.45px currentColor;transform:scaleX(1.0510);">Long</span>
<span class="t" style="left:850.03px;top:938px;font-size:17.06px;line-height:19px;color:#323130;-webkit-text-stroke:0.45px currentColor;transform:scaleX(1.0670);">Description</span>
<span class="t" style="left:605.50px;top:990px;font-size:17.06px;line-height:19px;color:#323130;transform:scaleX(0.8990);">Save</span>
<span class="t" style="left:645.80px;top:990px;font-size:17.06px;line-height:19px;color:#323130;transform:scaleX(1.0157);">and</span>
<span class="t" style="left:679.70px;top:990px;font-size:17.06px;line-height:19px;color:#323130;transform:scaleX(0.9818);">close</span>
<span class="t" style="left:597.20px;top:1031px;font-size:17.06px;line-height:19px;color:#ffffff;font-weight:700;transform:scaleX(0.9178);">Save</span>
<span class="t" style="left:742.80px;top:1031px;font-size:17.06px;line-height:19px;color:#201f1e;-webkit-text-stroke:0.45px currentColor;transform:scaleX(0.9756);">Cancel</span>
<span class="t" style="left:1648.57px;top:1023px;font-size:17.06px;line-height:19px;color:#323130;-webkit-text-stroke:0.45px currentColor;transform:scaleX(1.0344);">Publish</span>
<span class="t" style="left:1712.30px;top:1023px;font-size:17.06px;line-height:19px;color:#323130;-webkit-text-stroke:0.45px currentColor;transform:scaleX(1.0915);">training</span>
<span class="t" style="left:1856.30px;top:1022px;font-size:17.06px;line-height:19px;color:#323130;transform:scaleX(0.9928);">On</span>
<span class="t" style="left:1634.63px;top:1052px;font-size:12.67px;line-height:14px;color:#605e5c;transform:scaleX(0.9716);">Published</span>
<div class="a" style="left:0px;top:1080px;width:1920px;height:1px;background:#000000"></div>
</body></html>
